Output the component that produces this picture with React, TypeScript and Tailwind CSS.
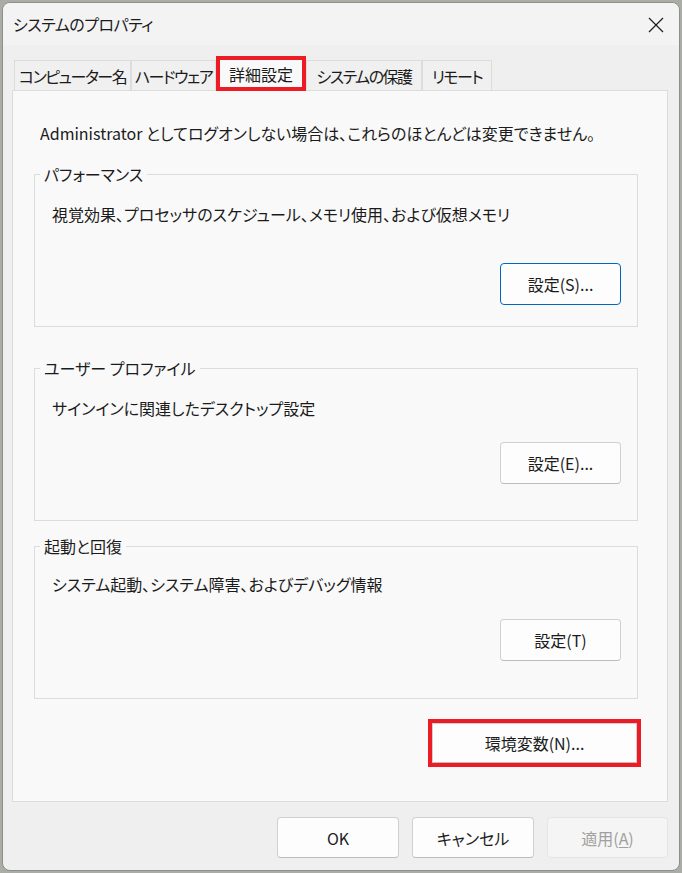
import React from "react";

type Tab = { label: string; width: string; active?: boolean };

const TABS: Tab[] = [
  { label: "コンピューター名", width: "w-[117px]" },
  { label: "ハードウェア", width: "w-[85px]" },
  { label: "詳細設定", width: "w-[90px]", active: true },
  { label: "システムの保護", width: "w-[116px]" },
  { label: "リモート", width: "w-[70px]" },
];

function WinButton({
  label,
  className = "",
  primary = false,
  disabled = false,
}: {
  label: React.ReactNode;
  className?: string;
  primary?: boolean;
  disabled?: boolean;
}) {
  const tone = disabled
    ? "bg-[#f5f5f5] border-[#e5e5e5] text-[#a0a0a0]"
    : primary
      ? "bg-[#fdfdfd] border-[#0067c0] text-[#1b1b1b]"
      : "bg-[#fdfdfd] border-[#d0d0d0] border-b-[#bcbcbc] text-[#1b1b1b]";
  return (
    <button
      type="button"
      className={`flex items-center justify-center rounded-[4px] border text-[16px] leading-none ${tone} ${className}`}
    >
      {label}
    </button>
  );
}

function GroupBox({
  title,
  text,
  button,
  primary,
  padTop,
  buttonGap,
}: {
  title: string;
  text: string;
  button: string;
  primary?: boolean;
  padTop: string;
  buttonGap: string;
}) {
  return (
    <div className={`relative flex h-[153px] flex-col border border-[#dcdcdc] ${padTop}`}>
      <span className="absolute -top-[11px] left-[5px] bg-[#f9f9f9] px-[4px] leading-[20px]">{title}</span>
      <p className="pl-[17px] leading-[20px]">{text}</p>
      <div className={`flex justify-end pr-[16px] ${buttonGap}`}>
        <WinButton label={button} primary={primary} className="h-[42px] w-[121px]" />
      </div>
    </div>
  );
}

export default function App() {
  return (
    <div className="h-[873px] w-[682px] overflow-hidden bg-[#a9ada5] pl-[2px] pt-[2px]">
      <div className="flex h-[869px] w-[678px] flex-col overflow-hidden rounded-[8px] border border-[#8d8f8b] bg-[#efefef] text-[16px] text-[#1b1b1b] font-['Noto_Sans_CJK_JP','Noto_Sans',sans-serif] [font-feature-settings:'palt']">
        {/* title bar */}
        <div className="flex h-[42px] shrink-0 items-center justify-between bg-[#f3f3f3] pl-[10px] pr-[15px]">
          <span className="tracking-[-0.5px]">システムのプロパティ</span>
          <svg width="16" height="16" viewBox="0 0 16 16" className="mt-[1px]">
            <path d="M1 1L15 15M15 1L1 15" stroke="#1b1b1b" strokeWidth="1.2" />
          </svg>
        </div>

        <div className="flex flex-1 flex-col pl-[9px] pr-[11px] pt-[11px]">
          {/* tabs */}
          <div className="relative z-10 flex h-[34px] items-end pl-[2px]">
            {TABS.map((t) =>
              t.active ? (
                <div
                  key={t.label}
                  className={`-mb-[1px] flex h-[35px] items-center justify-center whitespace-nowrap border-[4px] border-[#ed1c24] bg-[#f9f9f9] ${t.width}`}
                >
                  {t.label}
                </div>
              ) : (
                <div
                  key={t.label}
                  className={`flex h-[30px] items-center justify-center overflow-visible whitespace-nowrap border border-b-0 border-[#dcdcdc] bg-[#f0f0f0] tracking-[-1.5px] ${t.width}`}
                >
                  {t.label}
                </div>
              ),
            )}
          </div>

          {/* tab panel */}
          <div className="flex h-[712px] flex-col border border-[#dcdcdc] bg-[#f9f9f9] pb-[33px] pl-[21px] pr-[29px] pt-[32px]">
            <p className="pl-[6px] leading-[20px]">
              Administrator としてログオンしない場合は、これらのほとんどは変更できません。
            </p>

            <div className="mt-[31px]">
              <GroupBox
                title="パフォーマンス"
                text="視覚効果、プロセッサのスケジュール、メモリ使用、および仮想メモリ"
                button="設定(S)..."
                primary
                padTop="pt-[29px]"
                buttonGap="mt-[39px]"
              />
            </div>
            <div className="mt-[41px]">
              <GroupBox
                title="ユーザー プロファイル"
                text="サインインに関連したデスクトップ設定"
                button="設定(E)..."
                padTop="pt-[29px]"
                buttonGap="mt-[24px]"
              />
            </div>
            <div className="mt-[25px]">
              <GroupBox
                title="起動と回復"
                text="システム起動、システム障害、およびデバッグ情報"
                button="設定(T)"
                padTop="pt-[27px]"
                buttonGap="mt-[25px]"
              />
            </div>

            <div className="-mr-[3px] mt-[20px] flex justify-end">
              <div className="border-[4px] border-[#ed1c24]">
                <WinButton label="環境変数(N)..." className="h-[40px] w-[205px] rounded-none" />
              </div>
            </div>
          </div>

          {/* footer buttons */}
          <div className="flex justify-end gap-[13px] pt-[15px]">
            <WinButton label="OK" className="h-[41px] w-[122px]" />
            <WinButton label="キャンセル" className="h-[41px] w-[122px]" />
            <WinButton
              label={
                <>
                  適用(<span className="underline underline-offset-2">A</span>)
                </>
              }
              disabled
              className="h-[41px] w-[121px]"
            />
          </div>
        </div>
      </div>
    </div>
  );
}
